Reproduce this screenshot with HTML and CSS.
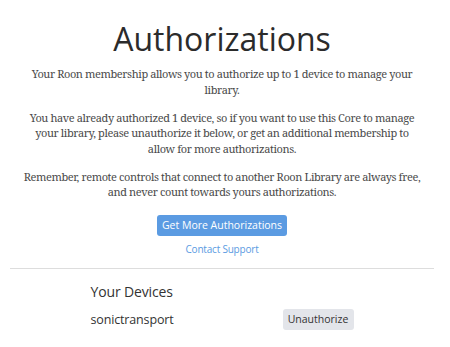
FILE: index.html
```html
<!DOCTYPE html>
<html lang="en">
<head>
  <meta charset="UTF-8">
  <title>Authorizations</title>
  <link rel="stylesheet" href="styles.css">
</head>
<body>
  <div class="page">
    <h1>Authorizations</h1>
    <div class="intro">
      <p>Your Roon membership allows you to authorize up to 1 device to manage your library.</p>
      <p>You have already authorized 1 device, so if you want to use this Core to manage your library, please unauthorize it below, or get an additional membership to allow for more authorizations.</p>
      <p>Remember, remote controls that connect to another Roon Library are always free, and never count towards yours authorizations.</p>
    </div>
    <div class="actions">
      <button class="primary-btn">Get More Authorizations</button>
      <a class="support-link" href="#">Contact Support</a>
    </div>
    <hr class="divider">
    <div class="devices">
      <h2>Your Devices</h2>
      <div class="device-row">
        <span class="device-name">sonictransport</span>
        <button class="secondary-btn">Unauthorize</button>
      </div>
    </div>
  </div>
</body>
</html>
```

FILE: styles.css
```css
body {
  margin: 0;
  font-family: 'Open Sans', sans-serif;
  color: #333;
  background-color: #fff;
}
.page {
  margin: 0 16px 0 10px;
  text-align: center;
}
h1 {
  font-size: 32px;
  font-weight: 400;
  margin: 0;
  padding-top: 19px;
  line-height: 40px;
  color: #2b2b2b;
}
.intro {
  font-family: 'Noto Serif', 'DejaVu Serif', serif;
  font-size: 11px;
  letter-spacing: -0.4px;
  line-height: 15.5px;
  color: #4a4a4a;
  padding: 0 12px;
  margin-top: 7px;
}
.intro p {
  margin: 0 0 12.5px;
}
.intro p:last-child {
  margin-bottom: 0;
}
.actions {
  margin-top: 15px;
  display: flex;
  flex-direction: column;
  align-items: center;
}
.primary-btn {
  font-family: 'Open Sans', sans-serif;
  font-size: 10.5px;
  color: #fff;
  background-color: #5b9be2;
  border: none;
  border-radius: 3px;
  height: 21px;
  width: 130px;
  padding: 0;
  white-space: nowrap;
  cursor: pointer;
}
.support-link {
  font-size: 10px;
  letter-spacing: -0.2px;
  line-height: 16px;
  color: #5b9be2;
  text-decoration: none;
  margin-top: 5px;
}
.divider {
  border: none;
  border-top: 1px solid #ddd;
  margin: 11px 0 0;
}
.devices {
  width: 263px;
  margin: 0 auto;
  text-align: left;
}
h2 {
  font-size: 14px;
  letter-spacing: -0.15px;
  font-weight: 400;
  margin: 12px 0 0;
  line-height: 22px;
}
.device-row {
  display: flex;
  justify-content: space-between;
  align-items: center;
  margin-top: 6px;
  font-size: 12.5px;
  letter-spacing: -0.15px;
}
.secondary-btn {
  font-family: 'Open Sans', sans-serif;
  font-size: 10.5px;
  color: #333;
  background-color: #e3e5ea;
  border: none;
  border-radius: 3px;
  height: 21px;
  width: 71px;
  padding: 0;
  white-space: nowrap;
}
```
